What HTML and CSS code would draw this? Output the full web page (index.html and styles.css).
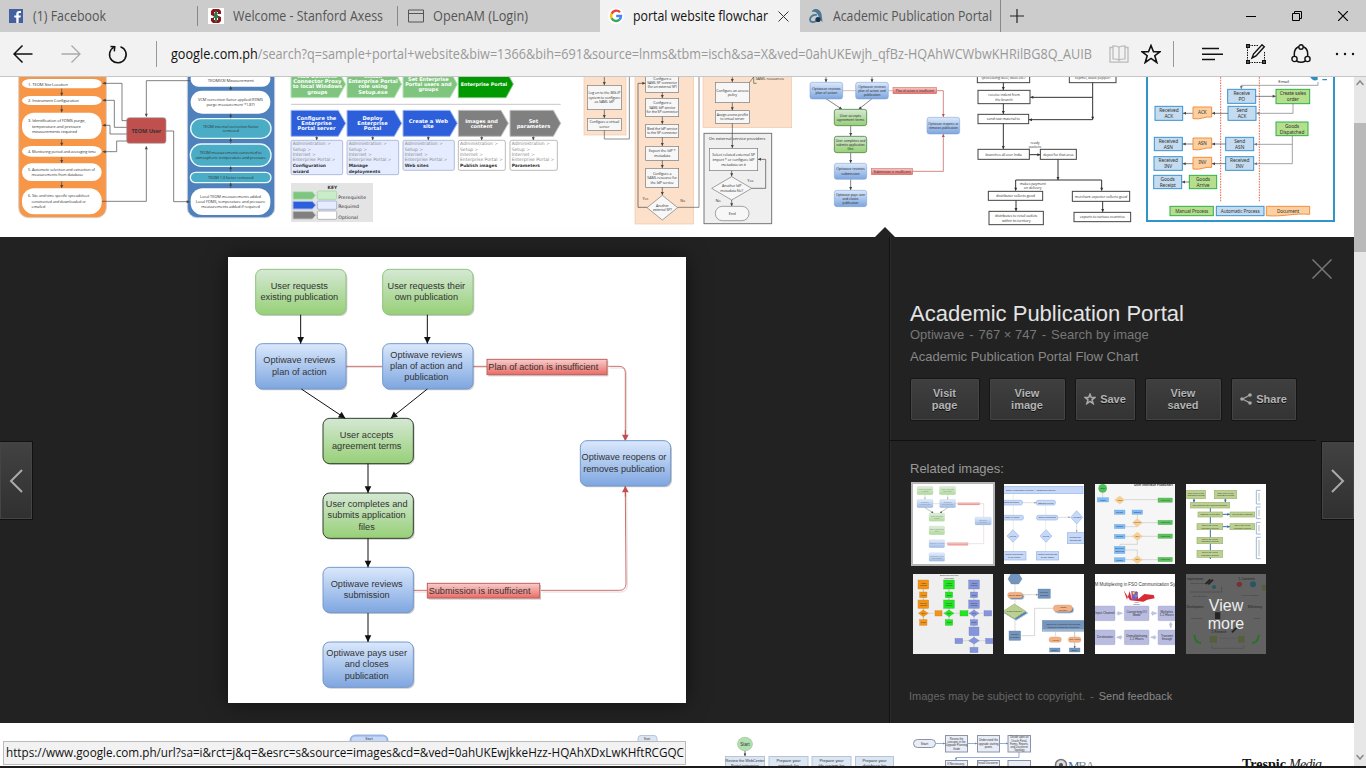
FILE: index.html
```html
<!DOCTYPE html>
<html lang="en">
<head>
<meta charset="utf-8">
<title>portal website flowchart</title>
<link rel="stylesheet" href="styles.css">
</head>
<body>
<div class="window">
  <header class="tabs">
    <div class="tab tab-facebook">
      <svg class="fav" viewBox="0 0 14 14"><rect width="14" height="14" fill="#4460a0"/><path d="M9.6 14V8.6h2l.3-2.2H9.6V5c0-.7.3-1 1.100-1h1.300V2c-.4-.1-1-.1-1.700-.1C8.400 1.900 7.300 3 7.300 4.800v1.600h-2v2.200h2V14z" fill="#fff"/></svg>
      <svg class="tab-title" width="74" height="24"><text x="0" y="17" textLength="73" lengthAdjust="spacingAndGlyphs">(1) Facebook</text></svg>
    </div>
    <div class="tab tab-axess">
      <svg class="fav" viewBox="0 0 16 16"><rect width="16" height="16" fill="#fff"/><path d="M5 1h6l2 2v3h-3V4H6v2l7 3v4l-2 2H5l-2-2v-3h3v2h4v-2L3 7V3z" fill="#8c1515"/><path d="M8 2l2 4-1 0 2 4H9v4H7v-4H5l2-4H6z" fill="#2d7a55"/></svg>
      <svg class="tab-title" width="151" height="24"><text x="0" y="17" textLength="150" lengthAdjust="spacingAndGlyphs">Welcome - Stanford Axess</text></svg>
    </div>
    <div class="tab tab-openam">
      <svg class="fav" viewBox="0 0 16 14"><path d="M.5 1h15v12H.5zM.5 4.500h15" fill="none" stroke="#555"/></svg>
      <svg class="tab-title" width="96" height="24"><text x="0" y="17" textLength="95" lengthAdjust="spacingAndGlyphs">OpenAM (Login)</text></svg>
    </div>
    <div class="tab tab-active">
      <svg class="fav" viewBox="0 0 16 16"><circle cx="8" cy="8" r="8" fill="#fff"/><g fill="none" stroke-width="2.400"><path d="M12 4.300A5 5 0 0 0 3.600 5.800" stroke="#ea4335"/><path d="M3.600 5.800a5 5 0 0 0 0 4.500" stroke="#fbbc05"/><path d="M3.600 10.300a5 5 0 0 0 7.800 1.400" stroke="#34a853"/><path d="M11.400 11.700A5 5 0 0 0 13 8H8.200" stroke="#4285f4"/></g></svg>
      <svg class="tab-title" width="136" height="24"><text x="0" y="17" textLength="135" lengthAdjust="spacingAndGlyphs">portal website flowchar</text></svg>
      <svg class="tab-close" viewBox="0 0 11 11"><path d="M.5.5l10 10M10.500.5l-10 10" stroke="#333"/></svg>
    </div>
    <div class="tab tab-academic">
      <svg class="fav" viewBox="0 0 14 16"><path d="M3 3C6-.5 11 1 12.500 6l1 8c-2-1-3-3-4-6C8.500 5 6 3 3 4z" fill="#4b7795"/><path d="M8 7C4 6 1 9 1 11.500S4 15 7 13" fill="none" stroke="#4b7795" stroke-width="1.800"/><circle cx="9" cy="11.500" r="2.600" fill="#17354d"/></svg>
      <svg class="tab-title" width="159" height="24"><text x="0" y="17" textLength="159" lengthAdjust="spacingAndGlyphs">Academic Publication Portal</text></svg>
    </div>
    <svg class="new-tab" viewBox="0 0 14 14"><path d="M7 0v14M0 7h14" stroke="#222" stroke-width="1.200"/></svg>
    <div class="window-buttons">
      <svg viewBox="0 0 10 10"><path d="M0 5.500h10" stroke="#000"/></svg>
      <svg viewBox="0 0 10 10"><path d="M.5 2.500h7v7h-7zM2.500 2.500v-2h7v7h-2" fill="none" stroke="#000"/></svg>
      <svg viewBox="0 0 10 10"><path d="M0 0l10 10M10 0L0 10" stroke="#000" stroke-width="1.200"/></svg>
    </div>
  </header>

  <nav class="toolbar">
    <svg class="tool back" viewBox="0 0 20 18"><path d="M9.500.5L1 9l8.500 8.500M1 9h18.500" fill="none" stroke="#111" stroke-width="1.500"/></svg>
    <svg class="tool forward" viewBox="0 0 20 18"><path d="M10.500.5L19 9l-8.500 8.500M19 9H.5" fill="none" stroke="#aaa" stroke-width="1.300"/></svg>
    <svg class="tool reload" viewBox="0 0 20 20"><path d="M6 3.200A8.300 8.300 0 1 0 12.500 2.700M2.500 2.500l4.300.300-.5 4.500" fill="none" stroke="#111" stroke-width="1.500"/></svg>
    <i class="bar"></i>
    <svg class="address" width="923" height="24"><text x="0" y="17" textLength="921" lengthAdjust="spacingAndGlyphs"><tspan class="host">google.com.ph</tspan>/search?q=sample+portal+website&amp;biw=1366&amp;bih=691&amp;source=lnms&amp;tbm=isch&amp;sa=X&amp;ved=0ahUKEwjh_qfBz-HQAhWCWbwKHRilBG8Q_AUIB</text></svg>
    <svg class="tool book" viewBox="0 0 20 18"><path d="M10 2.500C9 1 7 .8 4 .8v13c3 0 5 .2 6 1.700 1-1.500 3-1.700 6-1.700v-13c-3 0-5 .2-6 1.700v13M4 2.500H1v14.700h18V2.500h-3" fill="none" stroke="#bbb" stroke-width="1.300"/></svg>
    <svg class="tool star" viewBox="0 0 20 20"><path d="M10 1.500l2.500 6.200h6.500l-5.200 4 2 6.800-5.800-4.100-5.800 4.100 2-6.800-5.200-4h6.500z" fill="none" stroke="#111" stroke-width="1.600"/></svg>
    <i class="bar"></i>
    <svg class="tool hub" viewBox="0 0 21 14"><path d="M0 1.500h17M0 7.300h21M0 12.500h13" stroke="#111" stroke-width="1.400"/></svg>
    <svg class="tool pen" viewBox="0 0 20 20"><path d="M3 1.500h10M1.500 3v14M3 18.500h14M18.500 8v9" fill="none" stroke="#111" stroke-dasharray="1.500 1"/><path d="M.7.700h2.600v2.600H.7zM.7 16.700h2.600v2.600H.7zM16.700 16.700h2.600v2.600h-2.600zM6 14l1.500-4L16 .8l2.300 2L10 12z" fill="none" stroke="#111" stroke-width="1.400"/></svg>
    <svg class="tool share" viewBox="0 0 20 20"><path d="M3.500 12.500C2.500 6.500 5 2.500 10 2.500s7.500 4 6.500 10M5.500 17c2.500 1.500 6.500 1.500 9 0" fill="none" stroke="#111" stroke-width="1.500"/><g fill="#f2f2f2" stroke="#111" stroke-width="1.400"><circle cx="10" cy="3" r="2.200"/><circle cx="3.500" cy="15" r="2.600"/><circle cx="16.500" cy="15" r="2.600"/></g></svg>
    <svg class="tool dots" viewBox="0 0 20 4"><g fill="#111"><circle cx="2" cy="2" r="1.200"/><circle cx="10" cy="2" r="1.200"/><circle cx="18" cy="2" r="1.200"/></g></svg>
  </nav>

  <div class="viewport">
    <main class="page">
      <section class="results">
        <svg id="teom" width="285" height="160" viewBox="0 21 855 480"></svg>
        <svg id="enterprise" width="290" height="160" viewBox="0 21 870 480"></svg>
        <svg id="saml" width="225" height="160" viewBox="0 21 675 480"></svg>
        <svg id="academic" class="faded" width="162" height="160" viewBox="675 21 486 480"></svg>
        <svg id="supply" width="178" height="160" viewBox="36 21 534 480"></svg>
        <svg id="orders" width="214" height="160" viewBox="570 21 642 480"></svg>
      </section>

      <section class="preview">
        <svg class="caret" viewBox="0 0 20 10"><path d="M0 10L10 0l10 10z" fill="#222"/></svg>
        <button class="nav nav-prev"><svg viewBox="0 0 14 24"><path d="M13 1L2 12l11 11" fill="none" stroke="#aaa" stroke-width="2"/></svg></button>
        <div class="stage"><svg id="flow" class="picture" viewBox="9 21 1374 1338"></svg></div>
        <aside class="details">
          <svg class="dismiss" viewBox="0 0 20 20"><path d="M.5.5l19 19M19.500.5l-19 19" stroke="#777" stroke-width="1.500"/></svg>
          <div class="info">
            <h1>Academic Publication Portal</h1>
            <p class="source">Optiwave<s>-</s>767 × 747<s>-</s>Search by image</p>
            <p class="caption">Academic Publication Portal Flow Chart</p>
            <div class="actions">
              <button class="w68">Visit<br>page</button>
              <button class="w75">View<br>image</button>
              <button class="w59"><svg viewBox="0 0 12 12"><path d="M6 1.200l1.300 3.400h3.500L8 6.800l1.100 3.700L6 8.300l-3.100 2.200L4 6.800 1.200 4.600h3.500z" fill="none" stroke="#aaa" stroke-width="1.500"/></svg>Save</button>
              <button class="w75">View<br>saved</button>
              <button class="w64"><svg viewBox="0 0 12 12"><path d="M10 2L2.500 6l7.500 4" fill="none" stroke="#aaa" stroke-width="1.200"/><g fill="#aaa"><circle cx="10" cy="2" r="1.800"/><circle cx="2" cy="6" r="1.800"/><circle cx="10" cy="10" r="1.800"/></g></svg>Share</button>
            </div>
          </div>
          <div class="related">
            <h2>Related images:</h2>
            <div class="thumbs">
              <svg id="th1" class="selected faded" viewBox="39 87 240 240"></svg>
              <svg id="th2" viewBox="312 87 240 240"></svg>
              <svg id="th3" viewBox="585 87 240 240"></svg>
              <svg id="th4" viewBox="858 87 240 240"></svg>
              <svg id="th5" viewBox="39 357 240 240"></svg>
              <svg id="th6" viewBox="312 357 240 240"></svg>
              <svg id="th7" viewBox="585 357 240 240"></svg>
              <div class="more"><svg id="th8" viewBox="858 357 240 240"></svg><span>View<br>more</span></div>
            </div>
            <p class="legal">Images may be subject to copyright.<s>-</s><a>Send feedback</a></p>
          </div>
        </aside>
        <button class="nav nav-next"><svg viewBox="0 0 14 24"><path d="M1 1l11 11L1 23" fill="none" stroke="#aaa" stroke-width="2"/></svg></button>
      </section>

      <section class="below">
        <svg id="below" width="1354" height="43" viewBox="0 723 1354 43"></svg>
        <div class="status"><svg width="680" height="22"><text x="0" y="15" textLength="678" lengthAdjust="spacingAndGlyphs">https://www.google.com.ph/url?sa=i&amp;rct=j&amp;q=&amp;esrc=s&amp;source=images&amp;cd=&amp;ved=0ahUKEwjkkeHzz-HQAhXDxLwKHftRCGQC</text></svg></div>
      </section>
    </main>
    <div class="scrollbar">
      <svg viewBox="0 0 8 6"><path d="M.5 5L4 1l3.500 4" fill="none" stroke="#888" stroke-width="1.500"/></svg>
      <i class="thumb"></i>
      <svg class="down" viewBox="0 0 8 6"><path d="M.5 1L4 5l3.500-4" fill="none" stroke="#888" stroke-width="1.500"/></svg>
    </div>
  </div>
  <div class="taskbar-edge"></div>
</div>
<script src="diagrams.js"></script>
</body>
</html>
```
FILE: styles.css
```css
* { box-sizing: border-box; }
body { margin: 0; overflow: hidden; font-family: "Liberation Sans", Arial, sans-serif; background: #fff; }
svg { display: block; flex: none; }
p, h1, h2 { margin: 0; font-weight: normal; }
s { text-decoration: none; margin: 0 5px; }
.window { width: 1366px; height: 768px; display: flex; flex-direction: column; }

.tabs { height: 32px; background: #ccc; display: flex; flex: none; }
.tab { display: flex; align-items: center; width: 200px; overflow: hidden; border-right: 1px solid transparent; }
.tab-facebook, .tab-axess { background: linear-gradient(#888, #888) right 6px / 1px 20px no-repeat; }
.tab-facebook { width: 199px; padding-left: 9px; }
.tab-axess { padding-left: 9px; }
.tab-openam { width: 201px; padding-left: 9px; }
.tab-active { background: #f2f2f2; padding-left: 8px; }
.tab-academic { width: 201px; padding-left: 9px; border-right-color: #888; }
.fav { width: 16px; height: 16px; margin-right: 9px; }
.tab-facebook .fav { width: 14px; height: 14px; margin-right: 10px; }
.tab-openam .fav { height: 14px; }
.tab-academic .fav { width: 14px; margin-right: 10px; }
svg.tab-title text { font: 14px "Open Sans", "Noto Sans", sans-serif; fill: #555; }
.tab-active svg.tab-title text { fill: #111; }
.tab-close { width: 11px; height: 11px; margin-left: auto; margin-right: 10px; }
.new-tab { width: 14px; height: 14px; margin: 9px 0 0 9px; }
.window-buttons { margin-left: auto; padding-right: 18px; display: flex; gap: 36px; align-items: center; }
.window-buttons svg { width: 10px; height: 10px; }

.toolbar { height: 45px; flex: none; background: #f2f2f2; border-bottom: 1px solid #c6c6c6; display: flex; align-items: center; padding-left: 13px; }
.tool { width: 20px; height: 18px; }
.forward { margin-left: 28px; }
.reload { height: 20px; margin-left: 27px; }
.bar { width: 1px; height: 26px; background: #999; margin-left: 28px; }
.address { margin-left: 14px; }
svg.address text { font: 14.5px "Open Sans", "Noto Sans", sans-serif; fill: #999; }
svg.address .host { fill: #111; }
.book { margin-left: 15px; }
.star { height: 20px; margin-left: 12px; }
.star + .bar { margin-left: 12px; }
.hub { width: 21px; height: 14px; margin-left: 28px; }
.pen { height: 20px; margin-left: 23px; }
.share { height: 20px; margin-left: 25px; }
.dots { height: 4px; margin-left: 24px; }

.viewport { height: 689px; flex: none; display: flex; }
.page { width: 1354px; }
.results { height: 160px; display: flex; background: #fff; }

.preview { position: relative; height: 486px; background: #222; display: flex; overflow: visible; }
.caret { position: absolute; left: 875px; top: -10px; width: 20px; height: 10px; }
.nav { align-self: flex-start; margin: 204px 0 0; width: 33px; height: 79px; flex: none; padding: 0; border: 1px solid #111; background: linear-gradient(#424242, #303030); display: flex; align-items: center; justify-content: center; box-shadow: inset 0 0 0 1px #444; }
.nav-prev { width: 33px; border-left: 0; padding-right: 1px; }
.nav-next { border-right: 0; }
.nav svg { width: 14px; height: 24px; }
.stage { width: 856px; padding: 20px 0 0 195px; }
.picture { width: 458px; height: 446px; background: #fff; box-shadow: 0 0 20px rgba(0, 0, 0, .55); }
.details { position: relative; width: 432px; border-left: 1px solid #111; box-shadow: inset 1px 0 #2b2b2b; }
.dismiss { position: absolute; left: 422px; top: 22px; width: 20px; height: 20px; }
.info { height: 204px; width: 426px; border-bottom: 1px solid #111; padding: 64px 0 0 20px; }
h1 { font-size: 22px; line-height: 26px; color: #e4e4e4; white-space: nowrap; }
.source { font-size: 13px; line-height: 15px; color: #777; white-space: nowrap; }
.caption { font-size: 13px; line-height: 15px; color: #888; margin-top: 7px; }
.actions { display: flex; gap: 9px; margin-top: 14px; }
.actions button { height: 43px; padding: 0 1px 2px 0; border: 1px solid #151515; border-radius: 2px; background: linear-gradient(#3f3f3f, #333); box-shadow: inset 0 0 0 1px #444; color: #b4b4b4; font: bold 11px/12px "Liberation Sans", Arial, sans-serif; display: flex; align-items: center; justify-content: center; gap: 4px; text-shadow: 0 1px #111; }
.actions svg { width: 12px; height: 12px; }
.w68 { width: 70px; }
.w75 { width: 77px; }
.w59 { width: 61px; }
.w64 { width: 66px; }
.related { padding: 20px 0 0 20px; }
h2 { font-size: 13px; line-height: 15px; color: #999; }
.thumbs { display: grid; grid-template-columns: repeat(4, 80px); grid-auto-rows: 80px; gap: 10px 11px; margin: 8px 0 0 3px; }
.thumbs svg { width: 80px; height: 80px; background: #fff; }
.thumbs .selected { outline: 2px solid #b5b5b5; }
.more { position: relative; }
.more span { position: absolute; inset: 0; background: rgba(50, 50, 50, .6); color: #eee; font-size: 16px; line-height: 18px; text-align: center; padding-top: 23px; }
.legal { font-size: 11px; line-height: 14px; color: #666; margin: 35px 0 0 -1px; }
.legal a { color: #888; }

.below { position: relative; height: 43px; overflow: hidden; background: #fff; }
.status { position: absolute; left: 3px; top: 18px; width: 683px; height: 24px; border: 1px solid #bbb; background: #f2f2f2; padding-left: 2px; overflow: hidden; }
.status svg text { font: 12.5px "Open Sans", "Noto Sans", sans-serif; fill: #111; }
.scrollbar { width: 12px; height: 689px; background: #e7e7e7; display: flex; flex-direction: column; align-items: center; padding: 3px 0 6px; }
.scrollbar svg { width: 8px; height: 6px; }
.thumb { width: 12px; height: 129px; margin-top: 37px; background: #b9b9b9; }
.down { margin-top: auto; }
.taskbar-edge { height: 2px; background: #1b1b1b; }

/* diagram parts */
svg text { font-family: "Liberation Sans", Arial, sans-serif; fill: #333; }
svg .verdana { font-family: "DejaVu Sans", sans-serif; }
svg .bold { font-weight: bold; }
svg .light { fill: #fff; }
svg .grey { fill: #888; }
#teom text, #saml text, #supply text { font-family: "Open Sans", sans-serif; letter-spacing: -0.3px; }
#orders text { font-family: "Noto Sans", sans-serif; letter-spacing: -0.3px; }
.white { fill: #fff; stroke: none; }
.outline { fill: #fff; stroke: #444; stroke-width: 3; }
.thin { fill: #f7f7f7; stroke: #777; stroke-width: 2; }
.orange { fill: #f79646; stroke: #d8d0cc; stroke-width: 3; }
.navy { fill: #4f81bd; stroke: #c5cedb; stroke-width: 3; }
.teal { fill: #4bacc6; stroke: #e9fafa; stroke-width: 4; }
.brick { fill: #c0504d; stroke: #a6a6a6; stroke-width: 2; }
.peach { fill: #fce0c9; stroke: #ecc9ac; stroke-width: 2; }
.fog { fill: #efefef; stroke: #777; stroke-width: 3; }
.ch-soft { fill: #7fc57f; stroke: #b9e3b9; stroke-width: 3; }
.ch-green { fill: #009900; stroke: #81c581; stroke-width: 3; }
.ch-blue { fill: #2d5fdb; stroke: #a2b8ef; stroke-width: 3; }
.ch-grey { fill: #808080; stroke: #c0c0c0; stroke-width: 3; }
.note-blue { fill: #e5ecff; stroke: #8ea2cc; stroke-width: 2; }
.note-green { fill: #c9edc9; stroke: #9ccf9c; stroke-width: 2; }
.note { fill: #fff; stroke: #999; stroke-width: 2; }
.key { fill: #e4e4e4; }
.g-green { fill: url(#gg); stroke: #8fc47e; stroke-width: 3; }
.g-dark { fill: url(#gg); stroke: #2f3f2b; stroke-width: 3; }
.g-blue { fill: url(#gb); stroke: #7598cc; stroke-width: 3; }
.g-red { fill: url(#gr); stroke: #c0605c; stroke-width: 3; }
.faded .g-green, .faded .g-blue, .faded .g-red { stroke-width: 1.5; }
.faded .g-dark { stroke: #4f8747; stroke-width: 2.5; }
#th1 rect { stroke-width: 0.5; opacity: .75; }
#th1 text { fill: #888; }
.shadow { fill: #000; opacity: .2; }
.auto { fill: #c5dcf0; stroke: #3a94cf; stroke-width: 3; }
.manual { fill: #b5df8c; stroke: #2fb04a; stroke-width: 3; }
.doc { fill: #fcd0a0; stroke: #f58e3c; stroke-width: 3; }
.pale { fill: #c6d9fb; stroke: #9ab5e0; stroke-width: 2; }
.olive { fill: #bcd191; stroke: #9db56e; stroke-width: 2; }
.sky { fill: #7fbcf7; stroke: #6aa5df; }
.leaf { fill: #5cc35c; stroke: #48a848; }
.sand { fill: #f9cf92; stroke: #e8b871; }
.amber { fill: #f39416; stroke: #c77a16; }
.lime { fill: #22e622; stroke: #1eb41e; }
.violet { fill: #8595dc; stroke: #6a78bd; }
.steel { fill: #7395bd; stroke: #5b7ca3; }
.lilac { fill: #b9bce0; stroke: #9a9dc8; }
.salmon { fill: #f4b183; stroke: #d98e5a; }
.ice { fill: #dce6f2; stroke: #b5c6da; stroke-width: 1; }
.cell { fill: #e9edf7; stroke: #8b93a5; stroke-width: 1; }
```
FILE: diagrams.js
```js
// Corner-based drawing helpers; each returns SVG markup.
const T = (x, y, txt, fs = 13, cls = '', anchor = 'middle', lh = 1.22) => {
  const lines = txt.split('|');
  return lines.map((s, i) =>
    `<text x="${x}" y="${y + (i - (lines.length - 1) / 2) * fs * lh + fs * 0.36}" font-size="${fs}" text-anchor="${anchor}" class="${cls}">${s}</text>`).join('');
};
const B = (cls, x1, y1, x2, y2, txt = '', fs = 13, rx = 0, tc = '') =>
  `<rect class="${cls}" x="${x1}" y="${y1}" width="${x2 - x1}" height="${y2 - y1}" rx="${rx}"/>` +
  (txt ? T((x1 + x2) / 2, (y1 + y2) / 2, txt, fs, tc) : '');
const L = (pts, c = '#555', w = 2) => `<polyline points="${pts}" fill="none" stroke="${c}" stroke-width="${w}"/>`;
const A = (pts, c = '#444', w = 2, s = 9) => {
  const p = pts.split(' ').map(q => q.split(',').map(Number));
  const [x, y] = p[p.length - 1], [u, v] = p[p.length - 2];
  const d = Math.hypot(x - u, y - v) || 1, a = (x - u) / d, b = (y - v) / d, h = s * 0.5;
  return L(pts, c, w) + `<polygon fill="${c}" points="${x},${y} ${x - a * s - b * h},${y - b * s + a * h} ${x - a * s + b * h},${y - b * s - a * h}"/>`;
};
const D = (cls, x, y, w, h, txt = '', fs = 12) =>
  `<polygon class="${cls}" points="${x - w},${y} ${x},${y - h} ${x + w},${y} ${x},${y + h}"/>` + (txt ? T(x, y, txt, fs) : '');
const C = (cls, x1, y1, x2, y2, txt = '', fs = 16, tip = 22) =>
  `<polygon class="${cls}" points="${x1},${y1} ${x2 - tip},${y1} ${x2},${(y1 + y2) / 2} ${x2 - tip},${y2} ${x1},${y2}"/>` +
  (txt ? T((x1 + x2 - tip / 2) / 2, (y1 + y2) / 2, txt, fs, 'verdana bold light', 'middle', 1) : '');
const put = (id, ...parts) => { document.getElementById(id).innerHTML = parts.join(''); };

// TEOM data flow
const arrowsDown = (x, ...ys) => ys.map(([a, b]) => A(`${x},${a} ${x},${b}`)).join('');
put('teom',
  B('orange', 56, -30, 319, 443, '', 0, 30),
  B('white', 66, 27, 305, 55, '', 0, 28), B('white', 66, 78, 305, 105, '', 0, 28),
  B('white', 66, 128, 305, 207, '', 0, 36), B('white', 66, 228, 305, 260, '', 0, 28),
  B('white', 66, 280, 305, 333, '', 0, 28), B('white', 66, 355, 305, 433, '', 0, 36),
  T(84, 42, '1.  TEOM Site Location', 12.500, '', 'start'), T(84, 92, '2.  Instrument Configuration', 12.500, '', 'start'),
  T(84, 168, '3.  Identification of FDMS purge,|&#160;&#160;&#160;&#160;temperature and pressure|&#160;&#160;&#160;&#160;measurements required', 12.500, '', 'start', 1.35),
  T(84, 244, '4.  Monitoring period and averaging time', 11.500, '', 'start'),
  T(84, 307, '5.  Automatic selection and extraction of|&#160;&#160;&#160;&#160;measurements from database', 11.500, '', 'start', 1.4),
  T(84, 394, '6.  Site and time specific spreadsheet|&#160;&#160;&#160;&#160;constructed and downloaded or|&#160;&#160;&#160;&#160;emailed', 11.500, '', 'start', 1.4),
  arrowsDown(185, [56, 77], [106, 127], [208, 227], [261, 279], [334, 354]),
  B('brick', 380, 143, 498, 220, 'TEOM User', 17, 8, 'bold'),
  B('navy', 562, -30, 824, 443, '', 0, 30),
  B('white', 572, 5, 811, 50, '', 0, 24), T(692, 32, 'TEOM<tspan font-size="9">VCM</tspan> Measurement', 13),
  B('white', 572, 62, 811, 131, 'VCM correction factor applied (FDMS|purge measurement *1.87)', 12, 34),
  B('teal', 572, 146, 813, 205, 'TEOM internal correction factor|removed', 12, 30),
  B('teal', 571, 222, 813, 289, 'TEOM measurements converted to|atmospheric temperature and pressure', 12, 33),
  B('teal', 571, 307, 813, 338, 'TEOM 1.3 factor removed', 12, 16),
  B('white', 572, 355, 811, 435, 'Local TEOM measurements added|Local FDMS, temperature and pressure|measurements added if required', 12, 36),
  arrowsDown(692, [61, 49], [145, 131], [221, 205], [306, 289], [354, 338]),
  A('380,152 366,152 366,40 308,40'), A('380,172 343,172 343,91 308,91'), A('380,192 330,192 330,166 308,166'),
  A('380,213 350,213 350,245 308,245'), A('306,394 439,394 439,229'), A('570,32 439,32 439,140'), A('498,183 521,183 521,395 569,395'));

// Enterprise Portal setup
const menu = 'Administration &gt;|Setup  &gt;|Internet &gt;|Enterprise Portal &gt;';
const note = (cls, x1, x2, y2, txt) => B(cls, x1, 211, x2, y2, '', 0, 5) + T(x1 + 5, 245, menu, 13.500, 'verdana grey', 'start', 1.2) +
  txt.split('|').map((s, i) => T(x1 + 5, 287 + i * 16, s, 13, 'verdana bold', 'start')).join('');
put('enterprise',
  C('ch-soft', 18, 2, 182, 83), T(97, 42, 'Add Business|Connector Proxy|to local Windows|groups', 15.500, 'verdana bold light', 'middle', 1),
  C('ch-soft', 186, 2, 350, 83), T(264, 42, 'Install|Enterprise Portal|role using|Setup.exe', 15.500, 'verdana bold light', 'middle', 1),
  C('ch-soft', 354, 2, 517, 83), T(430, 43, 'Set Enterprise|Portal users and|groups', 15, 'verdana bold light', 'middle', 1.050),
  C('ch-green', 520, 2, 685, 83, 'Enterprise Portal', 14.500),
  L('18,103 827,103', '#aaa', 2),
  C('ch-blue', 18, 121, 182, 199, 'Configure the|Enterprise|Portal server', 15.500), C('ch-blue', 186, 121, 350, 199, 'Deploy|Enterprise|Portal', 15.500),
  C('ch-blue', 354, 121, 517, 199, 'Create a Web|site', 15.500), C('ch-grey', 520, 121, 670, 199, 'Images and|content', 15), C('ch-grey', 675, 121, 827, 199, 'Set|parameters', 15.500),
  arrowsDown(95, [199, 211]), arrowsDown(263, [199, 211]), arrowsDown(430, [199, 211]), arrowsDown(590, [199, 211]), arrowsDown(745, [199, 211]),
  note('note-blue', 18, 173, 314, 'Configuration|wizard'), note('note-blue', 186, 341, 314, 'Manage|deployments'), note('note-blue', 354, 508, 301, 'Web sites'),
  note('note', 520, 661, 301, 'Publish images'), note('note', 675, 817, 301, 'Parameters'),
  B('key', 18, 339, 264, 456), T(142, 351, 'KEY', 13, 'verdana bold'),
  C('ch-soft', 24, 365, 92, 388, '', 0, 10), C('ch-blue', 24, 394, 92, 417, '', 0, 10), C('ch-grey', 24, 424, 92, 447, '', 0, 10),
  B('note-green', 97, 363, 155, 388, '', 0, 4), B('note-blue', 97, 393, 155, 418, '', 0, 4), B('note', 97, 423, 155, 448, '', 0, 4),
  T(160, 381, 'Prerequisite', 14, 'verdana', 'start'), T(160, 410, 'Required', 14, 'verdana', 'start'), T(160, 441, 'Optional', 14, 'verdana', 'start'));

// SAML configuration
put('saml',
  B('peach', 27, 0, 153, 195), B('peach', 180, 0, 356, 462), B('peach', 384, 0, 650, 173), B('fog', 387, 190, 590, 461),
  B('thin', 37, 46, 139, 119, 'Log on to the BIG-IP|system to configure|as SAML IdP', 11), B('thin', 37, 145, 139, 181, 'Configure a virtual|server', 11),
  A('88,10 88,45'), A('88,119 88,144'), L('88,181 88,207 163,207 163,21'),
  B('thin', 212, 10, 311, 67, 'Configure a|SAML SP connector|(for an external SP)', 10.500), B('thin', 212, 85, 311, 140, 'Configure a|SAML IdP service|for the SP connector', 10.500),
  B('thin', 212, 163, 311, 202, 'Bind the IdP service|to the SP connector', 10.500), B('thin', 212, 229, 311, 271, 'Export the IdP *|metadata', 11.500),
  B('thin', 212, 295, 311, 352, 'Configure a|SAML resource for|the IdP service', 11), D('thin', 262, 413, 46, 37, 'Another|external SP?', 10.500),
  arrowsDown(262, [67, 84], [140, 162], [202, 228], [271, 294], [352, 375]),
  A('216,412 189,412 189,40 211,40'), L('308,412 372,412 372,21'), T(211, 387, 'Yes', 11), T(323, 393, 'No', 11),
  B('thin', 421, 37, 523, 98, 'Configure an access|policy', 11), B('thin', 421, 122, 523, 160, 'Assign access profile|to virtual server', 10.500),
  A('472,10 472,36'), A('472,98 472,121'), L('545,40 536,40 536,21'), L('523,38 536,21'), T(584, 27, 'SAML resources', 12),
  T(486, 206, 'On external service providers', 13), A('472,160 472,234'),
  B('thin', 403, 235, 548, 302, 'Select related external SP|import * or configure IdP|metadata on it', 11.500), D('thin', 470, 355, 60, 35, 'Another IdP|metadata file?', 11),
  A('470,302 470,319'), A('470,390 470,409'), A('530,355 572,355 572,268 549,268'), T(526, 331, 'Yes', 12), T(429, 392, 'No', 12),
  B('thin', 421, 409, 522, 452, 'End', 12, 21));

// Academic publication flow, small
const RED = '#c0504d';
put('academic',
  L('803,62 842,62', '#c99'), L('940,62 954,62', '#c99'), A('1085,62 1105,62 1105,141', RED), A('1013,304 1105,304 1105,192', RED),
  A('753,10 753,37'), A('891,10 891,37'), A('753,86 801,118'), A('891,86 851,118'), A('827,167 827,198'), A('827,248 827,279'), A('827,328 827,360'),
  B('g-blue', 705, 37, 803, 87, 'Optiwave reviews|plan of action', 11, 7), B('g-blue', 842, 37, 940, 87, 'Optiwave reviews|plan of action and|publication', 10.500, 7),
  B('g-red', 954, 52, 1085, 71, 'Plan of action is insufficient', 9.500), B('g-dark', 778, 118, 875, 167, 'User accepts|agreement terms', 11, 7),
  B('g-dark', 778, 199, 875, 248, 'User completes and|submits application|files', 10, 7), B('g-blue', 778, 280, 875, 328, 'Optiwave reviews|submission', 11, 7),
  B('g-blue', 778, 361, 875, 410, 'Optiwave pays user|and closes|publication', 10, 7), B('g-blue', 1056, 142, 1154, 192, 'Optiwave reopens or|removes publication', 9.800, 7),
  B('g-red', 889, 295, 1013, 314, 'Submission is insufficient', 10));

// Supply chain
put('supply',
  B('outline', 82, 0, 239, 38), T(160, 24, '(processing steel, wool etc.)', 11), B('outline', 358, 0, 498, 38), T(428, 24, 'topmel, black pepper)', 11),
  B('outline', 84, 61, 240, 101, 'receive indent from|the branch', 11), B('outline', 84, 133, 236, 161, 'send raw material to', 11),
  A('160,38 160,60', '#333', 3), A('160,101 160,132', '#333', 3), A('160,161 160,237', '#333', 3), A('428,38 428,149', '#333', 3), A('428,82 241,82', '#333', 3), A('428,149 237,149', '#333', 3),
  B('outline', 84, 238, 238, 268, 'branches all over India', 11), B('outline', 271, 238, 379, 268, 'depot for that area', 11), A('238,254 271,254', '#333', 3), T(255, 225, 'ready|packets', 11, '', 'middle', 1.100),
  A('324,268 324,330', '#333', 3), A('324,330 197,330 197,362', '#333', 3), A('324,330 455,330 455,362', '#333', 3), T(248, 346, 'makes payment|on delivery', 11, '', 'middle', 1.100),
  B('outline', 115, 364, 278, 391, 'distributor collects good', 11), B('outline', 367, 364, 539, 394, 'merchant exporter collects good', 11),
  A('198,391 198,423', '#333', 3), A('458,394 458,426', '#333', 3),
  B('outline', 117, 424, 280, 464, 'distributes to retail outlets|within its territory', 11), B('outline', 372, 427, 542, 455, 'exports to various countries', 11));

// Order processing
const doc = (y, s) => `<path class="doc" d="M729 ${y}h56v30c-20-3-32 9-56 5z"/>` + T(757, y + 15, s, 14);
put('orders',
  `<path d="M591 21V453H1152V21" fill="none" stroke="#2f95cb" stroke-width="6"/>`,
  `<path d="M812 21V396M928 21V396" stroke="#ee6b55" stroke-width="3" stroke-dasharray="5 3"/>`,
  `<path d="M1081 21q8 15 22 8V21zM1117 27h14v4h-14z" fill="#2e8fc0"/>`,
  T(1001, 25, 'Notification|Email', 13), A('1104,36 1104,46 874,46 874,57', '#777'),
  B('auto', 833, 58, 917, 100, 'Receive|PO', 14.500), B('manual', 978, 58, 1079, 101, 'Create sales|order', 14.500),
  B('auto', 615, 109, 698, 151, 'Received|ACK', 14.500), B('auto', 834, 109, 918, 151, 'Send|ACK', 14.500), B('manual', 978, 156, 1074, 197, 'Goods|Dispatched', 14.500),
  B('auto', 613, 202, 697, 242, 'Received|ASN', 14.500), B('auto', 827, 202, 911, 242, 'Send|ASN', 14.500), B('auto', 612, 260, 697, 301, 'Received|INV', 14.500), B('auto', 827, 260, 911, 301, 'Received|INV', 14.500),
  B('auto', 611, 316, 695, 356, 'Goods|Receipt', 14.500), B('manual', 718, 316, 800, 356, 'Goods|Arrive', 14.500),
  doc(111, 'ACK'), doc(204, 'ASN'), doc(262, 'INV'),
  A('917,79 977,79'), A('1029,101 1029,130 919,130', '#777'), A('834,130 786,130'), A('728,130 699,130'), A('827,222 786,222'), A('728,222 698,222'), A('827,281 786,281'), A('728,281 698,281'), A('718,336 696,336'),
  L('1027,197 1027,281', '#777'), A('1027,223 912,223', '#777'), A('1027,281 912,281', '#777'),
  B('manual', 660, 409, 790, 437, 'Manual Process', 14), B('auto', 799, 409, 942, 437, 'Automatic Process', 14),
  `<path class="doc" d="M949 409h130v24c-50-4-80 8-130 4z"/>`, T(1014, 423, 'Document', 14));

// Large publication flow
const N = (cls, x, y, txt) => B('shadow', x + 4, y + 5, x + 275, y + 140, '', 0, 20) + B(cls, x, y, x + 271, y + 136, '', 0, 20) + T(x + 131, y + 66, txt, 27.600);
const RS = (x1, y1, x2, y2, txt) => B('shadow', x1 + 4, y1 + 5, x2 + 4, y2 + 5) + B('g-red', x1, y1, x2, y2) + T(x1 + 4, (y1 + y2) / 2 - 1, txt, 27.400, '', 'start');
put('flow',
  `<defs><linearGradient id="gg" x2="0" y2="1"><stop offset="0" stop-color="#d5e8d4"/><stop offset="1" stop-color="#97d077"/></linearGradient>
   <linearGradient id="gb" x2="0" y2="1"><stop offset="0" stop-color="#dae8fc"/><stop offset="1" stop-color="#7ea6e0"/></linearGradient>
   <linearGradient id="gr" x2="0" y2="1"><stop offset="0" stop-color="#f8cecc"/><stop offset="1" stop-color="#ea6b66"/></linearGradient></defs>`,
  L('363,352 473,352', '#ddd', 3), L('363,349 473,349', '#cf6f6b', 3), L('744,352 786,352', '#ddd', 3), L('744,349 786,349', '#cf6f6b', 3),
  `<path d="M1150 349h32q19 0 19 19v190M564 1021h43M948 1021h235q20 0 20-20L1201 725" transform="translate(4 5)" fill="none" stroke="#ddd" stroke-width="3"/>`,
  `<path d="M1150 349h32q19 0 19 19v190M564 1021h43M948 1021h235q20 0 20-20L1201 725" fill="none" stroke="#cf6f6b" stroke-width="3"/>`,
  A('1201,540 1201,574', RED, 3, 20), A('1201,740 1201,707', RED, 3, 20),
  N('g-green', 92, 58, 'User requests|existing publication'), N('g-green', 473, 58, 'User requests their|own publication'),
  N('g-blue', 92, 281, 'Optiwave reviews|plan of action'), N('g-blue', 473, 281, 'Optiwave reviews|plan of action and|publication'),
  N('g-dark', 294, 505, 'User accepts|agreement terms'), N('g-dark', 294, 729, 'User completes and|submits application|files'),
  N('g-blue', 294, 952, 'Optiwave reviews|submission'), N('g-blue', 294, 1176, 'Optiwave pays user|and closes|publication'),
  N('g-blue', 1066, 572, 'Optiwave reopens or|removes publication'),
  RS(786, 328, 1146, 374, 'Plan of action is insufficient'), RS(607, 1000, 944, 1044, 'Submission is insufficient'),
  A('227,194 227,281', '#111', 3, 20), A('607,194 607,281', '#111', 3, 20), A('229,417 361,505', '#111', 3, 20), A('607,417 497,505', '#111', 3, 20),
  A('429,641 429,729', '#111', 3, 20), A('429,865 429,952', '#111', 3, 20), A('429,1089 429,1176', '#111', 3, 20));

// Related thumbnails
const G = '#999';
put('th1',
  A('75,119 75,133', G, 1, 5), A('143,119 143,133', G, 1, 5), A('75,158 100,174', '#444', 1, 6), A('143,158 120,174', '#444', 1, 6), L('99,146 251,146 251,186', '#d99', 1), L('134,266 251,266 251,210', '#caa', 1),
  B('g-green', 51, 94, 99, 119, 'User requests|existing', 6, 4), B('g-green', 118, 94, 167, 119, 'User requests|their own', 6, 4), B('g-blue', 51, 133, 99, 158, 'Optiwave|reviews plan', 6, 4), B('g-blue', 119, 133, 167, 158, 'Optiwave|reviews plan', 6, 4),
  B('g-red', 174, 142, 239, 150), B('g-green', 87, 174, 134, 199, 'User accepts|terms', 6, 4), B('g-green', 87, 213, 134, 239, 'User completes|files', 6, 4), B('g-blue', 87, 254, 134, 278, 'Optiwave reviews', 5.500, 4), B('g-blue', 87, 293, 134, 319, 'Optiwave pays|and closes', 6, 4), B('g-blue', 225, 186, 274, 210, 'Optiwave|reopens', 6, 4), B('g-red', 143, 262, 204, 271));
put('th2',
  B('pale', 305, 94, 549, 116), T(318, 105, 'Simple Publication Process - A Business Platform', 6.800, '', 'start'),
  B('pale', 300, 136, 367, 150, 'Submit document', 6, 5), B('pale', 409, 136, 466, 150, 'Starting review', 7, 5), B('pale', 300, 181, 370, 195, 'Assign reviewers', 6, 5), B('pale', 410, 181, 473, 195, 'Check documents', 6.500, 5),
  D('pale', 530, 187, 18, 20, 'Accepted', 6), D('pale', 339, 243, 18, 19, 'Review', 6), D('pale', 438, 243, 18, 19, 'Review', 6), B('pale', 502, 233, 560, 266), T(526, 250, 'Publish the|documents', 7),
  B('pale', 304, 290, 378, 315), T(343, 302, 'Return documents|to the author', 6.500), B('pale', 409, 290, 476, 315, 'Return documents|to the author', 7),
  L('340,116 340,290', '#ccc', 1), L('437,150 437,181', '#ccc', 1), L('437,195 437,224', '#ccc', 1), L('437,263 437,289', '#ccc', 1), A('367,143 409,143', G, 1, 6), A('473,187 511,187', G, 1, 6), A('530,207 530,232', G, 1, 6));
const gl = y => B('leaf', 774, y, 817, y + 13, 'Approved', 7);
put('th3', `<rect x="585" y="87" width="240" height="240" fill="#f6f6f6"/>`,
  T(760, 90, 'User Interface Flowchart', 10, 'bold'), `<circle cx="608" cy="100" r="13" fill="#4fbf59"/>`, T(608, 100, 'Start', 7),
  L('608,113 608,128', G, 1), L('675,134 774,134', G, 1), L('712,179 712,190', G, 1), L('660,215 712,215', G, 1), L('726,203 774,203', G, 1), L('675,244 774,244', G, 1), L('712,256 712,268 660,268 660,274', G, 1), L('660,314 774,314', G, 1), L('675,285 712,285 712,302', G, 1),
  B('sky', 592, 128, 626, 141, 'Login', 7), D('sand', 659, 135, 15, 12, 'Valid?', 6), B('sky', 643, 165, 675, 178, 'Create', 7), B('sky', 696, 165, 728, 178, 'Submit', 7), D('sand', 712, 203, 15, 12, 'Review', 6),
  B('sky', 643, 208, 675, 221, 'Return', 7), B('sky', 643, 238, 675, 251, 'Update', 7), D('sand', 712, 244, 15, 12, 'OK?', 6), B('sky', 643, 274, 675, 296, 'Send for|approval', 7), B('sky', 643, 308, 675, 321, 'Modify', 7), D('sand', 712, 314, 15, 12, 'OK?', 6),
  gl(129), gl(196), gl(237), gl(307));
const os = (x, y, w, h, tx = 0) => B('olive', x, y, x + w, y + h) + T(x + w / 2 + tx, y + h / 2, 'Step in the review|publication process', 6);
put('th4', A('882,130 882,142', '#3c6ca8', 3, 8), A('976,130 976,142', '#3c6ca8', 3, 8), A('931,159 931,312', '#3c6ca8', 3, 8), A('967,178 990,178', '#3c6ca8', 3, 8), A('967,215 990,215', '#3c6ca8', 3, 8),
  os(850, 106, 66, 25, 5), os(943, 106, 67, 25), B('olive', 871, 142, 989, 159, 'The confirmed user submits application', 6), B('olive', 894, 171, 967, 186, 'Optional review step', 6.500), B('olive', 990, 171, 1064, 186, 'Correct the problems', 6.500),
  os(891, 206, 77, 18), os(990, 206, 74, 18), os(891, 247, 77, 19), os(891, 286, 77, 21),
  ...[[106, 147], [156, 191], [202, 237], [247, 311]].map(([a, b]) => L(`1082,${a} 1069,${a} 1069,${b} 1082,${b}`, '#9eb9d9', 3) + L(`1077,${a + 8} 1077,${b - 8}`, '#999', 2)));
const lane = (cls, x) => B(cls, x - 16, 375, x + 16, 402, 'Assign|request', 6) + B(cls, x - 11, 411, x + 11, 428, 'Send', 6) + B(cls, x - 16, 435, x + 16, 460, 'Review|request', 6) + D(cls, x, 475, 15, 10, 'OK?', 6) + B(cls, x - 11, 494, x + 11, 511, 'Close', 6);
put('th5', `<rect x="39" y="357" width="240" height="240" fill="#efefef"/>`, T(147, 365, 'Business process|flowchart', 7),
  L('70,400 70,495', '#555', 1), L('147,400 147,495', '#555', 1), L('222,400 222,580', '#777', 1), L('70,475 265,475', '#aaa', 1), L('175,557 270,557', '#aaa', 1),
  lane('amber', 70), lane('lime', 147), lane('violet', 222), B('amber', 105, 467, 126, 483), B('lime', 180, 467, 204, 483), B('violet', 252, 467, 275, 483),
  B('violet', 207, 516, 237, 542), B('violet', 165, 550, 188, 566), D('violet', 222, 557, 16, 10), B('violet', 257, 550, 280, 566), B('violet', 210, 577, 234, 593));
put('th6', L('345,386 345,530', '#999', 1), A('369,419 414,419', '#888', 1, 6), L('364,542 404,542 404,460 460,460', '#888', 1), L('466,528 466,545', '#999', 1), A('524,528 524,580', '#444', 1, 6),
  `<path class="steel" d="M324 372l10-18h22l10 18-10 15h-22z"/>`, B('navy', 327, 416, 372, 433, '', 0, 9), B('salmon', 323, 412, 368, 429, 'Check Status', 6.500, 9), B('steel', 414, 402, 451, 430, 'Review|request', 7),
  D('navy', 348, 474, 36, 22), D('olive', 343, 469, 34, 22, 'Is this complete?', 6), B('navy', 464, 455, 521, 474, '', 0, 10), B('salmon', 460, 450, 517, 470, 'Assign|reviewer', 7, 10), B('steel', 327, 528, 362, 556, 'Return|to author', 7),
  B('steel', 427, 496, 560, 529), B('navy', 430, 525, 560, 529), T(490, 511, 'Check the completed documents|and then publish the document', 7), B('salmon', 447, 546, 484, 562, 'Accept', 7, 8), B('salmon', 505, 546, 543, 562, 'Not Accept', 6.500, 8), B('steel', 449, 579, 480, 591, 'Notify', 7), B('steel', 508, 579, 540, 591, 'Notify', 7));
const li = (x1, y, x2, tx, s) => B('lilac', x1, y, x2, y + 44, '', 0, 3) + T(tx, y + 22, s, 9.500);
put('th7', `<text x="584" y="394" font-size="14" textLength="248" lengthAdjust="spacingAndGlyphs">M Multiplexing in FSO Communication Sys</text>`,
  `<path d="M671 406l10 28 8-26 6 24 14-25 6 25 18-15 28 3 3 10-22 4-12 6-40-4z" fill="#d92b35"/><path d="M694 408l20 3-3 22-16 2z" fill="#8a55b5"/><path d="M698 411h6v7h-6z" fill="#e7db35"/><path d="M704 420h7v6h-7z" fill="#36a7d9"/>`, T(710, 445, 'Fibre|channel', 6),
  li(575, 453, 645, 615, 'Input Channel'), li(673, 453, 747, 710, 'Converting I/O|Mode'), li(774, 453, 840, 800, 'Multiplex|1,2 Hours'), li(575, 525, 645, 615, 'Destination'), li(673, 525, 747, 710, 'Demultiplexing|1,2 Hours'), li(774, 525, 840, 801, 'Transmit|through'),
  ...[[650, 475], [753, 475]].map(([x, y]) => A(`${x},${y} ${x + 17},${y}`, '#c0c3de', 5, 14)), ...[[667, 547], [769, 547]].map(([x, y]) => A(`${x},${y} ${x - 17},${y}`, '#c0c3de', 5, 14)), A('812,502 812,518', '#c0c3de', 5, 12));
put('th8', `<rect x="858" y="357" width="240" height="240" fill="#aaa"/>`,
  T(860, 371, 'requirements', 8, 'bold', 'start'), T(1040, 371, '1. Contents', 9, 'bold'), T(860, 456, 'Development', 8, 'bold', 'start'), T(1065, 456, 'Efficiency', 9, 'bold'), T(957, 530, '3. Research', 8, 'bold'),
  T(895, 385, 'Collect the project', 6), T(900, 425, 'plan and collect', 6), T(1050, 420, 'review all contents', 6), T(890, 490, 'process data', 6), T(1070, 490, 'prepare', 6),
  `<path d="M915 385l14-14 4 4-14 14zM923 386l14-14 4 4-14 14zM945 472h16v20h-16zM994 530l14-14 4 4-14 14z" fill="#111"/><circle cx="1018" cy="388" r="8" fill="#d33"/><circle cx="1059" cy="388" r="9" fill="#178cad"/><circle cx="942" cy="396" r="6" fill="#178cad"/><path d="M883 540q2 24 20 24M1076 540q-2 24-20 24" fill="none" stroke="#15d315" stroke-width="6"/><path d="M929 543h22v20h-22zM1014 543h20v20h-20zM1086 390h12v16h-12z" fill="#8aa34a"/>`,
  L('961,550 1010,550', '#666', 1), L('870,411 965,411 965,395', '#666', 2), L('936,570 936,580 1031,580 1031,570', '#444', 1));

// Next row of results
put('below',
  B('pale', 350.500, 735.500, 387.500, 750, '', 0, 5), T(369, 739, 'Start', 3.500), B('ice', 638, 735.500, 657, 750, '', 0, 3), T(647, 738.500, 'Start', 3),
  `<ellipse cx="745" cy="744" rx="7.500" ry="6.800" fill="#b2dfb0" stroke="#8cb58b" stroke-width=".5"/>`, T(745, 744, 'Start', 4.500), A('745,751 745,756', '#333', 0.700, 2.500),
  B('ice', 725.500, 756.500, 764.500, 772), T(745, 763, 'Review the WebCenter|Portal enterprise', 3.800), B('ice', 769, 756.500, 808, 772), T(788.500, 763, 'Prepare your|network for', 4.200),
  B('ice', 812, 756.500, 851, 772), T(831.500, 763, 'Prepare your|file system for', 4.200), B('ice', 855.500, 756.500, 893.500, 772), T(874.500, 763, 'Prepare your|database for', 4.200),
  B('cell', 913.500, 739.500, 935.500, 747.500, 'Start', 3.500, 4), B('cell', 945.500, 735.500, 967.500, 752, 'Review the|concepts in the|Upgrade Planning|Guide', 2.700), B('cell', 977.500, 735.500, 999.500, 752, 'Understand the|upgrade starting|points', 2.800), B('cell', 1008, 735.500, 1030.500, 752, 'Decide upon an|Oracle Portal,|Forms, Reports,|and Discoverer|Topology', 2.600),
  B('cell', 945.500, 760.500, 967.500, 775), T(956, 764, 'If Necessary,', 3), B('cell', 977.500, 760.500, 999.500, 775), T(988, 763.500, 'Install Discoverer', 2.600), B('cell', 1008, 760.500, 1030.500, 775),
  A('936,743.500 945,743.500', '#6788c8', 0.700, 2), A('968,743.500 977,743.500', '#6788c8', 0.700, 2), A('1000,743.500 1008,743.500', '#6788c8', 0.700, 2), A('1019,752 1019,757.500 956,757.500 956,760', '#6788c8', 0.700, 2),
  `<circle cx="1061" cy="765" r="5.500" fill="#ddd" stroke="#777" stroke-width="1.500"/><circle cx="1061" cy="765" r="2" fill="#555"/>`,
  `<text x="1068" y="770" font-size="13" style="font-family:'Liberation Serif',serif;fill:#3474ae" textLength="27"><tspan>M</tspan><tspan style="fill:#888">BA</tspan></text>`,
  `<text x="1242" y="769" font-size="14" font-weight="bold" style="font-family:'Liberation Serif',serif;fill:#111" textLength="44">Trespic</text>`,
  `<text x="1289" y="769" font-size="14" font-style="italic" style="font-family:'Liberation Serif',serif;fill:#222" textLength="33">Media</text>`);
```
